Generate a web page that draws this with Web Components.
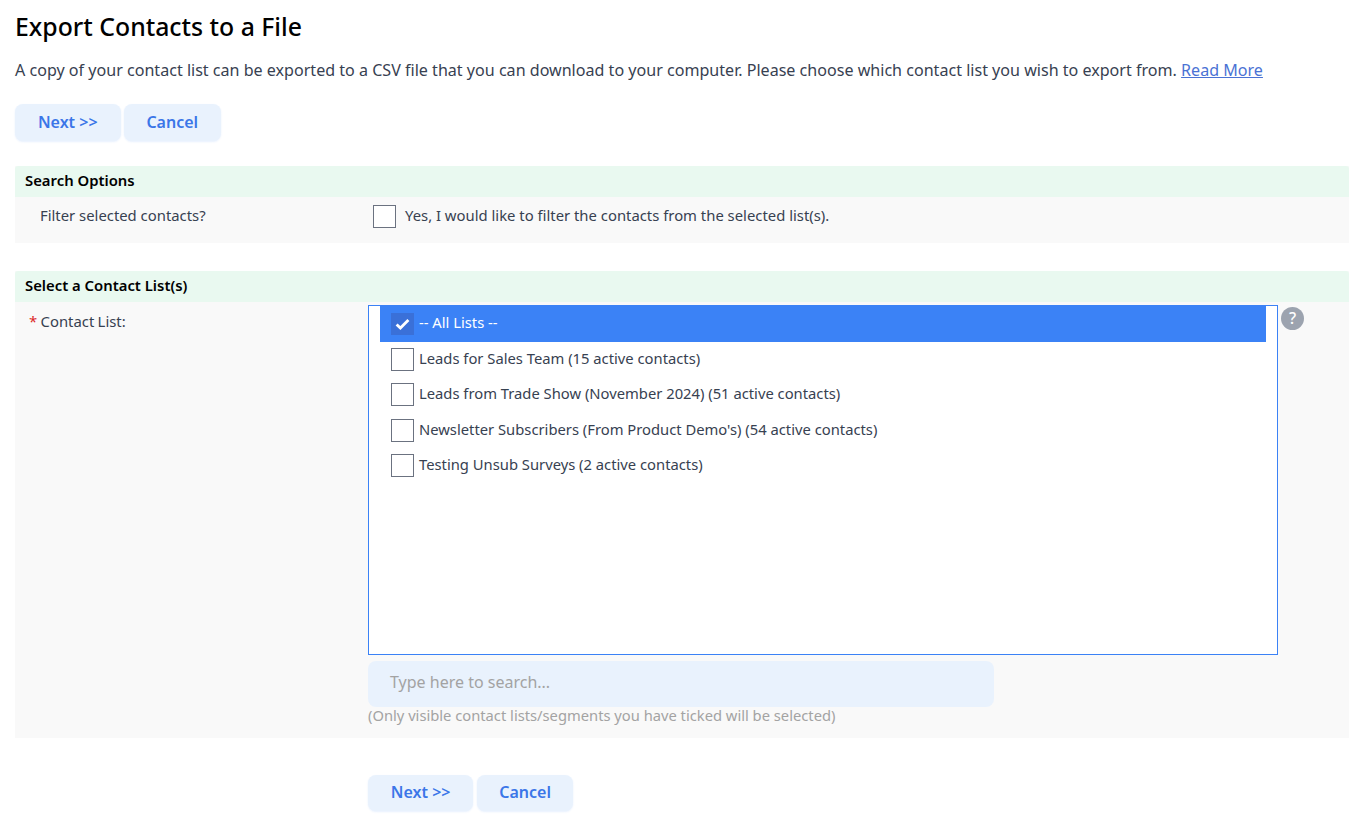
<!DOCTYPE html>
<html>
<head>
<meta charset="utf-8">
<title>Export Contacts to a File</title>
<style>
  html, body { margin: 0; padding: 0; background: #fff; }
  body { font-family: "Noto Sans", "Open Sans", sans-serif; color: #374151; overflow: hidden; height: 817px; }
</style>
</head>
<body>
<export-page></export-page>
<script>
const FONT = '"Noto Sans", "Open Sans", sans-serif';

class UiButton extends HTMLElement {
  constructor() {
    super();
    this.attachShadow({ mode: 'open' }).innerHTML = `
      <style>
        :host {
          display: inline-flex;
          align-items: center;
          justify-content: center;
          box-sizing: border-box;
          width: ${this.getAttribute('width')}px;
          height: 36.5px;
          padding-bottom: 1px;
          border-radius: 8px;
          background: #e9f2fd;
          box-shadow: 0 1px 2px rgba(59, 130, 246, 0.12);
          color: #3b76e8;
          font: 600 16px ${FONT};
        }
      </style>
      <slot></slot>`;
  }
}
customElements.define('ui-button', UiButton);

class UiCheckbox extends HTMLElement {
  constructor() {
    super();
    const on = this.hasAttribute('checked');
    this.attachShadow({ mode: 'open' }).innerHTML = `
      <style>
        :host {
          display: inline-flex;
          flex: none;
          align-items: center;
          justify-content: center;
          box-sizing: border-box;
          width: 23px;
          height: ${on ? 22 : 23}px;
          background: ${on ? '#3a70d8' : '#fff'};
          border: ${on ? '0' : '1px solid #6b7280'};
        }
        svg { width: 15px; height: 12px; }
      </style>
      ${on ? '<svg viewBox="0 0 15 12"><path d="M1.6 6.4 5.4 10 13.4 2" fill="none" stroke="#fff" stroke-width="2.8"/></svg>' : ''}`;
  }
}
customElements.define('ui-checkbox', UiCheckbox);

class FormPanel extends HTMLElement {
  constructor() {
    super();
    this.attachShadow({ mode: 'open' }).innerHTML = `
      <style>
        :host { display: block; margin-left: 15px; background: #f9f9f9; }
        header {
          height: 31px;
          padding-left: 10px;
          background: #e9f9f0;
          border-radius: 3px 3px 0 0;
          color: #000;
          font: 600 14.85px/28px ${FONT};
        }
      </style>
      <header>${this.getAttribute('heading')}</header>
      <slot></slot>`;
  }
}
customElements.define('form-panel', FormPanel);

class ListRow extends HTMLElement {
  constructor() {
    super();
    const on = this.hasAttribute('checked');
    this.attachShadow({ mode: 'open' }).innerHTML = `
      <style>
        :host {
          display: flex;
          align-items: center;
          gap: 5px;
          box-sizing: border-box;
          height: ${on ? 36.5 : 35.5}px;
          margin-top: ${on ? -1 : 0}px;
          padding-left: 11px;
          padding-top: ${on ? 1 : 0}px;
          font-size: 14.78px;
          color: ${on ? '#fff' : '#374151'};
          background: ${on ? '#3b82f6' : 'transparent'};
        }
        span { padding-bottom: 3px; }
      </style>
      <ui-checkbox ${on ? 'checked' : ''}></ui-checkbox>
      <span><slot></slot></span>`;
  }
}
customElements.define('list-row', ListRow);

class ContactListbox extends HTMLElement {
  constructor() {
    super();
    this.attachShadow({ mode: 'open' }).innerHTML = `
      <style>
        :host {
          display: block;
          box-sizing: border-box;
          width: 910px;
          height: 350px;
          padding: 0 11px;
          background: #fff;
          border: 1px solid #3b82f6;
        }
      </style>
      <slot></slot>`;
  }
}
customElements.define('contact-listbox', ContactListbox);

class ExportPage extends HTMLElement {
  constructor() {
    super();
    this.attachShadow({ mode: 'open' }).innerHTML = `
      <style>
        :host { display: block; font-size: 14.85px; }
        h1 { margin: 0; padding: 11px 0 0 15px; height: 35px; color: #000; font: 500 24.8px/30px ${FONT}; }
        .intro { margin: 0; padding: 12px 0 0 15px; height: 32px; font-size: 16.08px; line-height: 24px; white-space: nowrap; }
        .intro a { color: #4a72d4; text-decoration: underline; }
        .buttons { display: flex; gap: 3.5px; }
        .top { margin: 14px 0 25.5px 15px; }
        .filter { display: grid; grid-template-columns: 358px 1fr; height: 46px; }
        .filter .label { padding: 8px 0 0 25px; line-height: 20px; }
        .filter .value { display: flex; align-items: flex-start; gap: 9px; padding-top: 8px; line-height: 20px; }
        .second { margin-top: 28px; }
        .contacts { display: grid; grid-template-columns: 353px 910px 1fr; height: 436px; }
        .contacts .label { padding: 9px 0 0 14px; line-height: 20px; word-spacing: -0.5px; }
        .req { color: #dc2626; }
        .field { padding-top: 3px; }
        .help { margin: 5px 0 0 3px; }
        .search {
          box-sizing: border-box;
          width: 626px;
          height: 46px;
          margin-top: 6px;
          padding-left: 22px;
          border-radius: 8px;
          background: #e9f2fd;
          color: #a3a3a3;
          font-size: 16px;
          line-height: 43px;
        }
        .hint { color: #a3a3a3; line-height: 17px; font-size: 14.72px; }
        .bottom { margin: 36.6px 0 0 367.9px; }
      </style>
      <h1>Export Contacts to a File</h1>
      <p class="intro">A copy of your contact list can be exported to a CSV file that you can download to your computer. Please choose which contact list you wish to export from. <a>Read More</a></p>
      <div class="buttons top"><ui-button width="105.5">Next &gt;&gt;</ui-button><ui-button width="96.5">Cancel</ui-button></div>
      <form-panel heading="Search Options">
        <div class="filter">
          <div class="label">Filter selected contacts?</div>
          <div class="value"><ui-checkbox></ui-checkbox><span>Yes, I would like to filter the contacts from the selected list(s).</span></div>
        </div>
      </form-panel>
      <form-panel class="second" heading="Select a Contact List(s)">
        <div class="contacts">
          <div class="label"><span class="req">*</span> Contact List:</div>
          <div class="field">
            <contact-listbox>
              <list-row checked>-- All Lists --</list-row>
              <list-row>Leads for Sales Team (15 active contacts)</list-row>
              <list-row>Leads from Trade Show (November 2024) (51 active contacts)</list-row>
              <list-row>Newsletter Subscribers (From Product Demo's) (54 active contacts)</list-row>
              <list-row>Testing Unsub Surveys (2 active contacts)</list-row>
            </contact-listbox>
            <div class="search">Type here to search...</div>
            <div class="hint">(Only visible contact lists/segments you have ticked will be selected)</div>
          </div>
          <div class="help">
            <svg width="23" height="23" viewBox="0 0 23 23"><circle cx="11.5" cy="11.5" r="11.5" fill="#9ca3af"/><text x="11.5" y="17" text-anchor="middle" fill="#fff" font-family="Noto Sans" font-weight="500" font-size="16">?</text></svg>
          </div>
        </div>
      </form-panel>
      <div class="buttons bottom"><ui-button width="105.5">Next &gt;&gt;</ui-button><ui-button width="96.4">Cancel</ui-button></div>`;
  }
}
customElements.define('export-page', ExportPage);
</script>
</body>
</html>
